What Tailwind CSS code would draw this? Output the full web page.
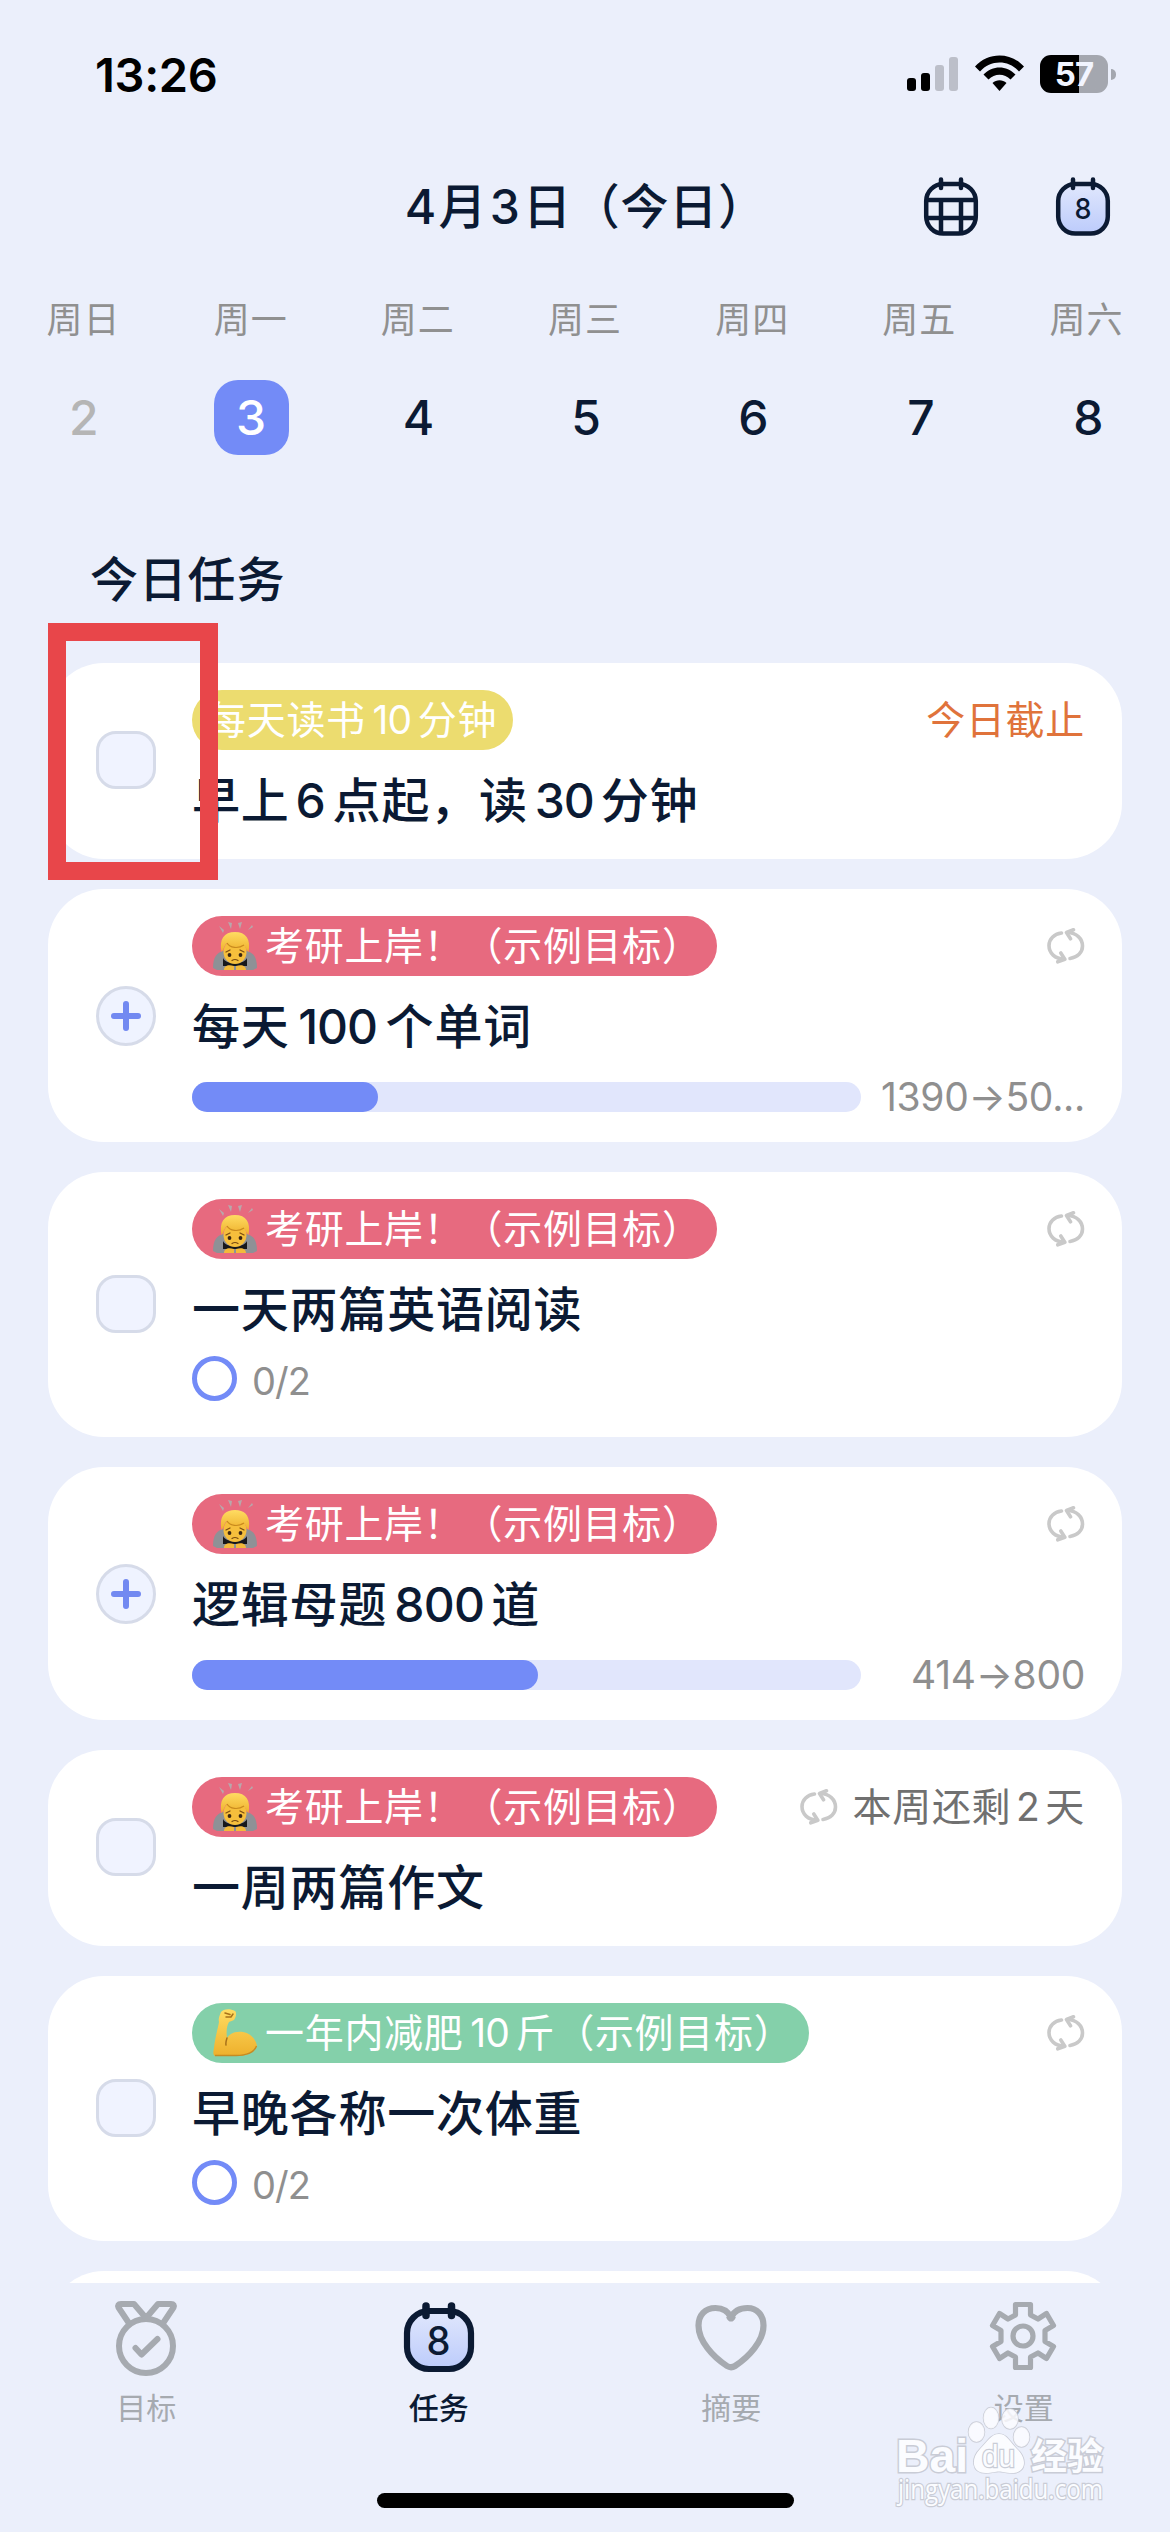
<!DOCTYPE html>
<html lang="zh-CN">
<head>
<meta charset="utf-8">
<title>今日任务</title>
<script src="https://cdn.jsdelivr.net/npm/@tailwindcss/browser@4"></script>
</head>
<body class="bg-[#ebeffb]">
<svg class="absolute size-0">
  <defs>
    <linearGradient id="calFill" x1="0" y1="0" x2="0" y2="1"><stop offset="0" stop-color="#e0e7fd"/><stop offset="1" stop-color="#bccbfb"/></linearGradient>
    <linearGradient id="skin" x1="0" y1="0" x2="0" y2="1"><stop offset="0" stop-color="#ffdc62"/><stop offset="1" stop-color="#eeb02c"/></linearGradient>
  </defs>
  <symbol id="repeat" viewBox="0 0 38 36">
    <g fill="none" stroke="#c9c9c9" stroke-width="3.6" stroke-linecap="round" stroke-linejoin="round">
      <path d="M14.500 5C7 6 2 11 2 17.500C2 25 8 31 17 31"/><path d="M13.800 25l4 6.300-7 2.500"/>
      <path d="M23 30.500C30.500 29.500 35.500 24.500 35.500 18C35.500 10.500 29.500 4.800 20.500 4.500"/><path d="M23.500 10.800l-4-6.300 7-2.700"/>
    </g>
  </symbol>
  <symbol id="bow" viewBox="0 0 46 50">
    <g fill="#b9a7ab"><path d="M7 5l5 4-1 3zM16 1l4 1-1 6zM26 2l4-1-2 7zM36 9l4-5 1 2z"/></g>
    <path d="M1 47C1 36 5 31 12 30H34C41 31 45 36 45 47L41 49H5Z" fill="#8e9196"/>
    <path d="M11 37C14 44 32 44 35 37V45H11Z" fill="#17181b"/>
    <path d="M12 49C12 45 16 43 22 45V49ZM24 49V45C30 43 34 45 34 49Z" fill="#f3b93a"/>
    <ellipse cx="23" cy="31" rx="11.500" ry="12" fill="#f6bf3c"/>
    <path d="M9.500 31C7 18 12 11 23 11C34 11 39 18 36.500 31C34 29 34 26 32 24C25 28 19 26 15 22C12 24 12 29 9.500 31Z" fill="url(#skin)"/>
    <path d="M15 22C18 27 26 28 32 24" fill="none" stroke="#c98a1e" stroke-width="1.200"/>
    <circle cx="17.500" cy="34" r="1.900" fill="#3a2611"/><circle cx="28.500" cy="34" r="1.900" fill="#3a2611"/>
    <path d="M20 39.500Q23 37.500 26 39.500M14 31l4-2M28 29l4 2" fill="none" stroke="#7a4c12" stroke-width="1.200" stroke-linecap="round"/>
  </symbol>
  <symbol id="muscle" viewBox="0 0 46 50">
    <path d="M9 4C11 1 18 0 23 3C25 5 24 9 22 12L17 14C15 17 14 23 15 30C18 25 24 23 31 24C38 25 44 31 45 38C42 45 34 48 24 48H3C1 47 1 45 2 40C3 30 6 20 7 14C6 10 8 7 9 4Z" fill="url(#skin)"/>
    <path d="M15 30C14 33 13.500 35 14 37M13 5l5 1.500M14 9h5l2-3" fill="none" stroke="#a8721a" stroke-width="1.500" stroke-linecap="round"/>
    <path d="M3 47.500H24C34 47.500 42 44.500 44.500 38" fill="none" stroke="#c58b23" stroke-width="1.500"/>
  </symbol>
</svg>

<div class="relative flex h-[2532px] w-[1170px] flex-col overflow-hidden bg-[#ebeffb] font-['Inter','Noto_Sans_CJK_SC',sans-serif] text-[#0b1a33]">

  <!-- status bar -->
  <div class="flex h-[148px] shrink-0 items-center justify-between pl-[95px] pr-[54px] text-black">
    <div class="text-[47px] font-semibold leading-none tracking-[-0.3px]">13:26</div>
    <div class="flex items-center">
      <svg class="h-[40px] w-[52px]" viewBox="0 0 52 40"><g transform="translate(0 2)"><rect y="22" width="9" height="13" rx="3"/><rect x="14" y="17" width="9" height="18" rx="3"/><g fill="#bcbfc9"><rect x="28" y="9" width="9" height="26" rx="3"/><rect x="42" y="1" width="9" height="34" rx="3"/></g></g></svg>
      <svg class="ml-[16px] h-[40px] w-[49px]" viewBox="0 0 49 40"><path d="M0 12.500C13-2.200 36-2.200 49 12.500L44 17.500C33.500 5.500 15.500 5.500 5 17.500Z"/><path d="M8.500 20.500C17.500 11 31.500 11 40.500 20.500L35.500 25.500C29.500 19 19.500 19 13.500 25.500Z"/><path d="M17.500 29C21.500 25.300 27.500 25.300 31.500 29L24.500 37Z"/></svg>
      <div class="ml-[16px] flex h-[38px] w-[68px] items-center justify-center rounded-[11px] bg-linear-to-r from-black from-[57%] to-[#a4a7af] to-[57%] text-[33px] font-bold leading-none tracking-[-1px] text-[#f2f5ff]">57</div>
      <div class="ml-[3px] h-[11px] w-[5px] rounded-r-full bg-[#a4a7af]"></div>
    </div>
  </div>

  <!-- header -->
  <div class="relative flex h-[118px] shrink-0 items-center justify-center">
    <div class="flex text-[48px] font-medium leading-[70px] tracking-[0.7px]"><span class="w-[35px] text-center">4</span>月<span class="w-[36px] text-center">3</span>日（今日）</div>
    <div class="absolute right-[58px] top-[27px] flex gap-[74px]">
      <svg class="h-[62px] w-[58px]" viewBox="0 0 58 62" fill="none" stroke="#0b1a33" stroke-width="4.500" stroke-linecap="round"><rect x="4.200" y="9" width="49.600" height="49.600" rx="17"/><path d="M19 4.500V13M39 4.500V13M5 25H53M5 43H53M19 25V57M39 25V57"/></svg>
      <svg class="h-[62px] w-[58px]" viewBox="0 0 58 62" stroke="#0b1a33" stroke-width="4.500" stroke-linecap="round"><rect x="4.200" y="9" width="49.600" height="49.600" rx="17" fill="url(#calFill)"/><path d="M19 4.500V13M39 4.500V13"/><text x="29" y="43.500" text-anchor="middle" stroke="none" fill="#0b1a33" font-size="29" font-weight="500" textLength="17" lengthAdjust="spacingAndGlyphs">8</text></svg>
    </div>
  </div>

  <!-- week strip -->
  <div class="grid h-[104px] shrink-0 grid-cols-7 items-center pt-[3px] text-center text-[36px] leading-[50px] tracking-[1px] text-[#909090]">
    <div>周日</div><div>周一</div><div>周二</div><div>周三</div><div>周四</div><div>周五</div><div>周六</div>
  </div>
  <div class="grid h-[95px] w-[1172px] shrink-0 grid-cols-7 items-center justify-items-center text-center text-[48px] font-medium leading-none">
    <div class="text-[#b5b5b5]">2</div>
    <div class="flex size-[75px] items-center justify-center rounded-[24px] bg-[#738bf7] text-white">3</div>
    <div>4</div><div>5</div><div>6</div><div>7</div><div>8</div>
  </div>

  <div class="flex h-[198px] shrink-0 items-center pl-[90px] pt-[32px] text-[48px] font-medium leading-[70px] tracking-[0.8px]">今日任务</div>

  <!-- task list -->
  <div class="flex h-[1620px] shrink-0 flex-col gap-[30px] overflow-hidden px-[48px]">

    <div class="flex h-[196px] shrink-0 items-center rounded-[56px] bg-white pl-[48px] pr-[37px]">
      <div class="mb-[2px] h-[58px] w-[60px] shrink-0 rounded-[20px] border-[3px] border-[#d6dbe9] bg-[#f0f3ff]"></div>
      <div class="ml-[36px] h-full flex-1 pt-[27px]">
        <div class="flex h-[60px] items-center justify-between text-[39px] leading-[60px] tracking-[0.7px]">
          <div class="flex h-[60px] w-[321px] rounded-full bg-[#ecdc6f] pl-[15px] text-white">每天读书<span class="w-[52px] text-center tracking-[-1px]">10</span>分钟</div>
          <div class="text-[#e0733b]">今日截止</div>
        </div>
        <div class="mt-[19px] flex h-[64px] text-[48px] font-medium leading-[64px] tracking-[0.8px]">早上<span class="w-[43px] text-center">6</span>点起，读<span class="w-[73px] text-center tracking-[-1px]">30</span>分钟</div>
      </div>
    </div>

    <div class="flex h-[253px] shrink-0 items-center rounded-[56px] bg-white pl-[48px] pr-[37px]">
      <svg class="size-[60px] shrink-0" viewBox="0 0 60 60"><circle cx="30" cy="30" r="28.500" fill="#eff3ff" stroke="#d6dbe9" stroke-width="3"/><path d="M18 30H42M30 18V42" stroke="#7289f1" stroke-width="6" stroke-linecap="round"/></svg>
      <div class="ml-[36px] h-full flex-1 pt-[27px]">
        <div class="flex h-[60px] items-center justify-between text-[39px] leading-[60px] tracking-[0.7px]">
          <div class="flex h-[60px] w-[525px] items-center rounded-full bg-[#e76a7f] pl-[20px] text-white"><svg class="mr-[7px] h-[50px] w-[46px]"><use href="#bow"/></svg>考研上岸！（示例目标）</div>
          <svg class="h-[36px] w-[38px]"><use href="#repeat"/></svg>
        </div>
        <div class="mt-[19px] flex h-[64px] text-[48px] font-medium leading-[64px] tracking-[0.8px]">每天<span class="w-[96px] text-center tracking-[-1px]">100</span>个单词</div>
        <div class="mt-[23px] flex h-[30px] items-center justify-between">
          <div class="h-[30px] w-[669px] rounded-full bg-[#e1e6fc]"><div class="h-full rounded-full bg-[#738bf7]" style="width:27.8%"></div></div>
          <div class="text-[39px] leading-[30px] tracking-[-0.3px] text-[#8f8f8f]">1390→50...</div>
        </div>
      </div>
    </div>

    <div class="flex h-[265px] shrink-0 items-center rounded-[56px] bg-white pl-[48px] pr-[37px]">
      <div class="mb-[2px] h-[58px] w-[60px] shrink-0 rounded-[20px] border-[3px] border-[#d6dbe9] bg-[#f0f3ff]"></div>
      <div class="ml-[36px] h-full flex-1 pt-[27px]">
        <div class="flex h-[60px] items-center justify-between text-[39px] leading-[60px] tracking-[0.7px]">
          <div class="flex h-[60px] w-[525px] items-center rounded-full bg-[#e76a7f] pl-[20px] text-white"><svg class="mr-[7px] h-[50px] w-[46px]"><use href="#bow"/></svg>考研上岸！（示例目标）</div>
          <svg class="h-[36px] w-[38px]"><use href="#repeat"/></svg>
        </div>
        <div class="mt-[19px] h-[64px] text-[48px] font-medium leading-[64px] tracking-[0.8px]">一天两篇英语阅读</div>
        <div class="mt-[14px] flex h-[45px] items-center">
          <div class="size-[45px] rounded-full border-[5px] border-[#738bf7]"></div>
          <div class="ml-[15px] pt-[5px] text-[38px] leading-[40px] tracking-[-1px] text-[#8f8f8f]">0/2</div>
        </div>
      </div>
    </div>

    <div class="flex h-[253px] shrink-0 items-center rounded-[56px] bg-white pl-[48px] pr-[37px]">
      <svg class="size-[60px] shrink-0" viewBox="0 0 60 60"><circle cx="30" cy="30" r="28.500" fill="#eff3ff" stroke="#d6dbe9" stroke-width="3"/><path d="M18 30H42M30 18V42" stroke="#7289f1" stroke-width="6" stroke-linecap="round"/></svg>
      <div class="ml-[36px] h-full flex-1 pt-[27px]">
        <div class="flex h-[60px] items-center justify-between text-[39px] leading-[60px] tracking-[0.7px]">
          <div class="flex h-[60px] w-[525px] items-center rounded-full bg-[#e76a7f] pl-[20px] text-white"><svg class="mr-[7px] h-[50px] w-[46px]"><use href="#bow"/></svg>考研上岸！（示例目标）</div>
          <svg class="h-[36px] w-[38px]"><use href="#repeat"/></svg>
        </div>
        <div class="mt-[19px] flex h-[64px] text-[48px] font-medium leading-[64px] tracking-[0.8px]">逻辑母题<span class="w-[104px] text-center tracking-[-0.8px]">800</span>道</div>
        <div class="mt-[23px] flex h-[30px] items-center justify-between">
          <div class="h-[30px] w-[669px] rounded-full bg-[#e1e6fc]"><div class="h-full rounded-full bg-[#738bf7]" style="width:51.75%"></div></div>
          <div class="text-[39px] leading-[30px] tracking-[-0.3px] text-[#8f8f8f]">414→800</div>
        </div>
      </div>
    </div>

    <div class="flex h-[196px] shrink-0 items-center rounded-[56px] bg-white pl-[48px] pr-[37px]">
      <div class="mb-[2px] h-[58px] w-[60px] shrink-0 rounded-[20px] border-[3px] border-[#d6dbe9] bg-[#f0f3ff]"></div>
      <div class="ml-[36px] h-full flex-1 pt-[27px]">
        <div class="flex h-[60px] items-center justify-between text-[39px] leading-[60px] tracking-[0.7px]">
          <div class="flex h-[60px] w-[525px] items-center rounded-full bg-[#e76a7f] pl-[20px] text-white"><svg class="mr-[7px] h-[50px] w-[46px]"><use href="#bow"/></svg>考研上岸！（示例目标）</div>
          <div class="flex items-center text-[#707070]"><svg class="mr-[14px] h-[36px] w-[38px]"><use href="#repeat"/></svg>本周还剩<span class="w-[34px] text-center">2</span>天</div>
        </div>
        <div class="mt-[19px] h-[64px] text-[48px] font-medium leading-[64px] tracking-[0.8px]">一周两篇作文</div>
      </div>
    </div>

    <div class="flex h-[265px] shrink-0 items-center rounded-[56px] bg-white pl-[48px] pr-[37px]">
      <div class="mb-[2px] h-[58px] w-[60px] shrink-0 rounded-[20px] border-[3px] border-[#d6dbe9] bg-[#f0f3ff]"></div>
      <div class="ml-[36px] h-full flex-1 pt-[27px]">
        <div class="flex h-[60px] items-center justify-between text-[39px] leading-[60px] tracking-[0.7px]">
          <div class="flex h-[60px] w-[617px] items-center rounded-full bg-[#84d0aa] pl-[20px] text-white"><svg class="mr-[7px] h-[50px] w-[46px]"><use href="#muscle"/></svg>一年内减肥<span class="w-[52px] text-center tracking-[-1px]">10</span>斤（示例目标）</div>
          <svg class="h-[36px] w-[38px]"><use href="#repeat"/></svg>
        </div>
        <div class="mt-[19px] h-[64px] text-[48px] font-medium leading-[64px] tracking-[0.8px]">早晚各称一次体重</div>
        <div class="mt-[14px] flex h-[45px] items-center">
          <div class="size-[45px] rounded-full border-[5px] border-[#738bf7]"></div>
          <div class="ml-[15px] pt-[5px] text-[38px] leading-[40px] tracking-[-1px] text-[#8f8f8f]">0/2</div>
        </div>
      </div>
    </div>

    <div class="h-[196px] shrink-0 rounded-[56px] bg-white"></div>
  </div>

  <!-- tab bar -->
  <div class="grid h-[210px] shrink-0 grid-cols-4 justify-items-center bg-[#ebeffb] pt-[13px] text-[30px] leading-[40px] text-[#a6aab0]">
    <div class="flex flex-col items-center">
      <svg class="h-[84px] w-[80px]" viewBox="0 0 80 84" fill="none" stroke="#a6aab0" stroke-width="6" stroke-linecap="round" stroke-linejoin="round"><circle cx="40" cy="50" r="27"/><path d="M22.500 26.500L12.500 11.500Q11 8 15 8H28L40 22L52 8H65Q69 8 67.500 11.500L57.500 26.500"/><path d="M29.500 52L35.500 58.500L51.500 43"/></svg>
      <div class="mt-[8px]">目标</div>
    </div>
    <div class="flex flex-col items-center font-medium text-[#0b1a33]">
      <svg class="h-[84px] w-[80px]" viewBox="0 0 80 84" stroke="#0b1a33" stroke-width="6.200" stroke-linecap="round"><rect x="8" y="15" width="64" height="58" rx="22" fill="url(#calFill)"/><path stroke-width="7.500" d="M27 10V19.500M52.500 10V19.500"/><text x="39.500" y="59" text-anchor="middle" stroke="none" fill="#0b1a33" font-size="39" font-weight="500" textLength="24" lengthAdjust="spacingAndGlyphs">8</text></svg>
      <div class="mt-[8px]">任务</div>
    </div>
    <div class="flex flex-col items-center">
      <svg class="h-[84px] w-[80px]" viewBox="0 0 80 84" fill="none" stroke="#a6aab0" stroke-width="6.200" stroke-linejoin="round"><path d="M40 21.500C37 15 31 12 24.500 12C14 12 7.500 19 7.500 29.500C7.500 45 22 61 36 70Q40 72.500 44 70C58 61 72.500 45 72.500 29.500C72.500 19 66 12 56.500 12C49 12 43 15 40 21.500Z"/><path d="M38 20Q40 25 42 20"/></svg>
      <div class="mt-[8px]">摘要</div>
    </div>
    <div class="flex flex-col items-center">
      <svg class="h-[84px] w-[80px]" viewBox="0 0 80 84" fill="none" stroke="#a6aab0" stroke-width="5.200" stroke-linejoin="round"><circle cx="39" cy="40" r="10"/><path d="M31.500 8.500H46.500V19L54 23L62.500 17.500L69.500 29.500L61 34.500V45.500L69.500 50.500L62.500 62.500L54 57L46.500 61V71.500H31.500V61L24 57L15.500 62.500L8.500 50.500L17 45.500V34.500L8.500 29.500L15.500 17.500L24 23L31.500 19Z"/></svg>
      <div class="mt-[8px]">设置</div>
    </div>
  </div>
  <div class="mx-auto h-[15px] w-[417px] shrink-0 rounded-full bg-black"></div>

  <!-- tap highlight -->
  <div class="absolute left-[48px] top-[623px] h-[257px] w-[170px] border-[18px] border-[#e8464a]"></div>

  <!-- watermark -->
  <svg class="absolute left-[890px] top-[2400px] h-[120px] w-[224px]" viewBox="0 0 224 120" fill="#fbfcff" stroke="#c9ccd6" stroke-width="1.500" paint-order="stroke">
    <g fill-opacity=".85"><ellipse cx="86.500" cy="32" rx="8" ry="10"/><ellipse cx="101" cy="18" rx="7.500" ry="10.500"/><ellipse cx="120" cy="19" rx="8" ry="10"/><ellipse cx="131.500" cy="37" rx="8" ry="10"/></g>
    <path d="M109 34C117 34 120 42 127 49C137 58 137 73 122 73C115 73 113 71.500 109 71.500C105 71.500 102 73 96 73C81 73 81 58 90 49C97 42 101 34 109 34Z"/>
    <g font-family="Liberation Sans" font-weight="700" stroke-width="3">
      <text x="6" y="72" font-size="47" textLength="72" lengthAdjust="spacingAndGlyphs">Bai</text>
      <text x="92" y="67" font-size="31" font-weight="400" textLength="33" lengthAdjust="spacingAndGlyphs" stroke-width="2.500">du</text>
      <text x="141" y="70" font-size="37" font-family="Noto Sans CJK SC" textLength="72" lengthAdjust="spacingAndGlyphs">经验</text>
    </g>
    <text x="8" y="99" font-size="27" font-family="Open Sans" textLength="205" lengthAdjust="spacingAndGlyphs" stroke-width="2.500">jingyan.baidu.com</text>
  </svg>
</div>
</body>
</html>
